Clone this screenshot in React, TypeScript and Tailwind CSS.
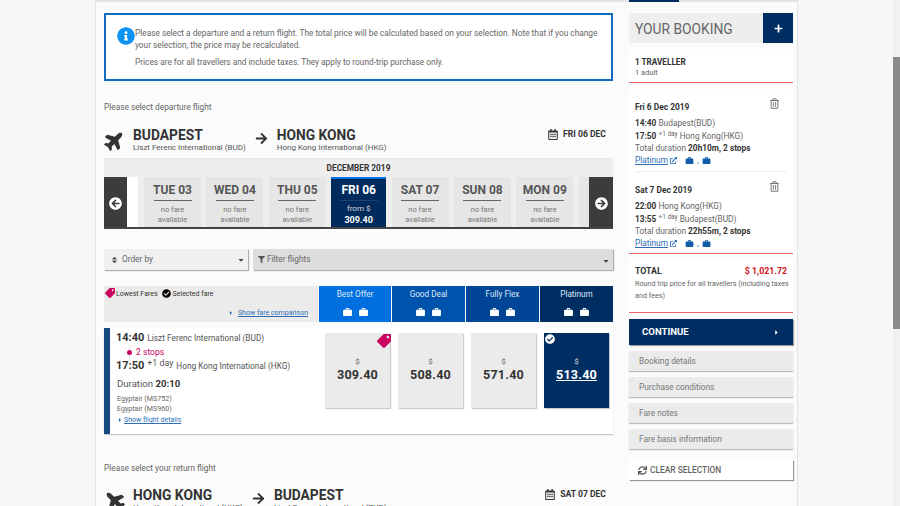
import {
  FaArrowCircleLeft,
  FaArrowCircleRight,
  FaArrowRight,
  FaCaretDown,
  FaCaretRight,
  FaCheckCircle,
  FaExternalLinkAlt,
  FaFilter,
  FaPlane,
  FaPlus,
  FaRegCalendarAlt,
  FaRegTrashAlt,
  FaSort,
  FaSync,
  FaTag,
  FaInfoCircle,
} from "react-icons/fa";

const days = [
  { label: "TUE 03" },
  { label: "WED 04" },
  { label: "THU 05" },
  { label: "FRI 06", selected: true },
  { label: "SAT 07" },
  { label: "SUN 08" },
  { label: "MON 09" },
];

const fares = [
  { name: "Best Offer", bg: "bg-[#0070e0]", w: "w-[72px]" },
  { name: "Good Deal", bg: "bg-[#0053ad]", w: "w-[73px]" },
  { name: "Fully Flex", bg: "bg-[#004596]", w: "w-[73px]" },
  { name: "Platinum", bg: "bg-[#002e63]", w: "w-[73px]" },
];

const Bag = ({ className }: { className?: string }) => (
  <svg viewBox="0 0 10 9" className={className} fill="currentColor">
    <path d="M3 2V1a1 1 0 0 1 1-1h2a1 1 0 0 1 1 1v1h2a1 1 0 0 1 1 1v5a1 1 0 0 1-1 1H1a1 1 0 0 1-1-1V3a1 1 0 0 1 1-1h2zm1 0h2V1H4v1z" />
  </svg>
);

const RouteHeader = ({
  from,
  fromAirport,
  to,
  toAirport,
  date,
  back,
}: {
  from: string;
  fromAirport: string;
  to: string;
  toAirport: string;
  date: string;
  back?: boolean;
}) => (
  <div className="flex items-start h-[30px] text-[#333]">
    <FaPlane className={`w-[21px] h-[21px] mt-[2px] shrink-0 ${back ? "rotate-[225deg]" : "-rotate-45"}`} />
    <div className="ml-[8px] flex flex-col">
      <span className="text-[13.8px] leading-[15px] font-bold">{from}</span>
      <span className="text-[8px] leading-[9px] text-[#555]">{fromAirport}</span>
    </div>
    <FaArrowRight className="w-[13px] h-[13px] ml-[9px] mt-[4px] shrink-0" />
    <div className="ml-[9px] flex flex-col">
      <span className="text-[13.8px] leading-[15px] font-bold">{to}</span>
      <span className="text-[8px] leading-[9px] text-[#555]">{toAirport}</span>
    </div>
    <div className="ml-auto mr-[7px] flex items-center gap-[5px]">
      <FaRegCalendarAlt className="w-[10px] h-[11px]" />
      <span className="text-[8.6px] font-bold">{date}</span>
    </div>
  </div>
);

const DayCard = ({ label, selected }: { label: string; selected?: boolean }) =>
  selected ? (
    <div className="w-[55px] h-[52px] bg-[#002b5c] border-t-[3px] border-[#0070e0] text-white flex flex-col items-center shrink-0">
      <span className="text-[12px] font-bold leading-[14px] mt-[4px]">{label}</span>
      <span className="w-[38px] h-px bg-[#1c4272] mt-[3px]" />
      <span className="text-[8px] leading-[10px] mt-[3px] text-[#ddd]">from $</span>
      <span className="text-[9px] font-bold leading-[10px] mt-[1px]">309.40</span>
    </div>
  ) : (
    <div className="w-[57px] h-[51px] bg-[#e6e6e6] flex flex-col items-center text-[#555] shrink-0">
      <span className="text-[12px] font-bold leading-[14px] mt-[6px]">{label}</span>
      <span className="w-[38px] h-px bg-[#666] mt-[3px]" />
      <span className="text-[7.5px] leading-[10px] mt-[4px] text-[#777] text-center">
        no fare
        <br />
        available
      </span>
    </div>
  );

const FareTile = ({ price, selected, tag }: { price: string; selected?: boolean; tag?: boolean }) => (
  <div
    className={`relative w-[65px] h-[75px] flex flex-col items-center shadow-[1px_1px_1px_rgba(0,0,0,0.2)] ${
      selected ? "bg-[#002e63] text-white" : "bg-[#ebebeb] text-[#333]"
    }`}
  >
    {tag && <FaTag className="absolute -right-[1px] top-[1px] w-[14px] h-[14px] text-[#c8055f] rotate-90" />}
    {selected && <FaCheckCircle className="absolute left-[1px] top-[1px] w-[10px] h-[10px] text-white" />}
    <span className={`text-[8px] mt-[24px] leading-[10px] ${selected ? "text-[#ddd]" : "text-[#666]"}`}>$</span>
    <span className={`text-[12.6px] font-bold leading-[16px] tracking-[0.2px] ${selected ? "underline" : ""}`}>
      {price}
    </span>
  </div>
);

const Leg = ({
  date,
  depTime,
  depPlace,
  arrTime,
  arrPlace,
  duration,
}: {
  date: string;
  depTime: string;
  depPlace: string;
  arrTime: string;
  arrPlace: string;
  duration: string;
}) => (
  <div className="relative pl-[6px] pr-[5px] h-[82px]">
    <FaRegTrashAlt className="absolute right-[14px] top-[9px] w-[9px] h-[11px] text-[#777]" />
    <p className="text-[8.4px] font-bold text-[#333] leading-[12px] pt-[12px]">{date}</p>
    <p className="text-[8.3px] leading-[12px] mt-[4px] text-[#666]">
      <b className="text-[#333]">{depTime}</b> {depPlace}
    </p>
    <p className="text-[8.3px] leading-[12px] mt-px text-[#666]">
      <b className="text-[#333]">{arrTime}</b> <sup className="text-[6.5px]">+1 day</sup> {arrPlace}
    </p>
    <p className="text-[8.3px] leading-[12px] text-[#666]">
      Total duration <b className="text-[#333]">{duration}</b>
    </p>
    <p className="flex items-center text-[8.3px] leading-[12px] text-[#2d6db5]">
      <span className="underline">Platinum</span>
      <FaExternalLinkAlt className="w-[7px] h-[7px] ml-[2px]" />
      <Bag className="w-[9px] h-[7px] ml-[8px] text-[#0f5ca8]" />
      <span className="mx-[3px]">,</span>
      <Bag className="w-[9px] h-[7px] text-[#0f5ca8]" />
    </p>
  </div>
);

const SideButton = ({ label }: { label: string }) => (
  <div className="h-[20px] bg-[#ebebeb] text-[#777] text-[8.3px] leading-[20px] pl-[10px] shadow-[0_1px_1px_rgba(0,0,0,0.25)]">
    {label}
  </div>
);

export default function App() {
  return (
    <div className="w-[900px] h-[506px] overflow-hidden flex bg-[#f7f7f7] font-['Roboto',sans-serif]">
      <div className="w-[95px] shrink-0" />

      <div className="w-[703px] shrink-0 h-[506px] overflow-hidden flex flex-col bg-[#fbfbfb] border-x border-[#e2e2e2]">
        <div className="h-[2px] bg-[#e4e4e4] shrink-0 flex">
          <span className="ml-[533px] w-[50px] bg-[#002e63]" />
        </div>

        <div className="flex">
          <main className="w-[509px] ml-[8px] pt-[11px] shrink-0">
            <div className="relative h-[68px] border-2 border-[#0f6cc0] bg-white pl-[29px] pr-[8px] pt-[12px] text-[8.3px] leading-[12px] text-[#666]">
              <span className="absolute left-[11px] top-[12px] w-[18px] h-[18px]">
                <FaInfoCircle className="w-[18px] h-[18px] text-[#0d94f2]" />
              </span>
              <p>
                Please select a departure and a return flight. The total price will be calculated based on your
                selection. Note that if you change your selection, the price may be recalculated.
              </p>
              <p className="mt-[5px]">Prices are for all travellers and include taxes. They apply to round-trip purchase only.</p>
            </div>

            <p className="text-[8.3px] leading-[12px] text-[#666] mt-[20px]">Please select departure flight</p>
            <div className="mt-[15px]">
              <RouteHeader
                from="BUDAPEST"
                fromAirport="Liszt Ferenc International (BUD)"
                to="HONG KONG"
                toAirport="Hong Kong International (HKG)"
                date="FRI 06 DEC"
              />
            </div>

            <div className="h-[71px] bg-[#eeeeee] border-t border-[#e4e4e4] flex flex-col">
              <p className="text-center text-[8.3px] font-bold text-[#333] leading-[10px] pt-[4px] h-[18px] shrink-0">DECEMBER 2019</p>
              <div className="relative flex-1 flex items-start overflow-hidden border-b-2 border-[#444]">
                <div className="w-[23px] h-[52px] bg-[#3c3c3c] shrink-0 flex items-center justify-center">
                  <FaArrowCircleLeft className="w-[13px] h-[13px] text-white" />
                </div>
                <div className="w-[11px] h-[52px] bg-white shrink-0" />
                <div className="ml-[6px] flex gap-[5.4px] pt-0 items-end h-[51px]">
                  {days.map((d) => (
                    <DayCard key={d.label} label={d.label} selected={d.selected} />
                  ))}
                  <div className="w-[57px] h-[51px] bg-[#e6e6e6] shrink-0" />
                </div>
                <div className="absolute right-0 top-0 w-[24px] h-[52px] bg-[#3c3c3c] flex items-center justify-center">
                  <FaArrowCircleRight className="w-[13px] h-[13px] text-white" />
                </div>
              </div>
            </div>

            <div className="flex mt-[20px] h-[21px] text-[#666] text-[8.3px] gap-[5px]">
              <div className="w-[144px] bg-[#f0f0f0] shadow-[1px_1px_1px_rgba(0,0,0,0.3)] flex items-center pl-[7px] pr-[3px]">
                <FaSort className="w-[7px] h-[8px] text-[#555]" />
                <span className="ml-[4px]">Order by</span>
                <FaCaretDown className="ml-auto w-[8px] h-[8px] text-[#444]" />
              </div>
              <div className="flex-1 bg-[#dddddd] shadow-[1px_1px_1px_rgba(0,0,0,0.3)] flex items-center pl-[5px] pr-[3px]">
                <FaFilter className="w-[7px] h-[7px] text-[#555]" />
                <span className="ml-[2px]">Filter flights</span>
                <FaCaretDown className="ml-auto w-[8px] h-[8px] mt-[3px] text-[#444]" />
              </div>
            </div>

            <div className="flex mt-[16px] h-[36px]">
              <div className="w-[215px] bg-[#ebebeb] relative text-[7px] text-[#333]">
                <div className="flex items-center h-[14px] pl-[1px]">
                  <FaTag className="w-[10px] h-[10px] text-[#c8055f] rotate-90" />
                  <span className="ml-[1px] mt-[3px]">Lowest Fares</span>
                  <FaCheckCircle className="w-[9px] h-[9px] ml-[4px] text-black" />
                  <span className="ml-[2px] mt-[3px]">Selected fare</span>
                </div>
                <div className="flex justify-end items-center pr-[10px] mt-[8px] text-[#2d6db5]">
                  <FaCaretRight className="w-[6px] h-[6px]" />
                  <span className="ml-[4px] underline">Show fare comparison</span>
                </div>
              </div>
              <div className="flex flex-1 ml-px gap-px">
                {fares.map((f) => (
                  <div key={f.name} className={`${f.bg} ${f.w} text-[#dce8f7] flex flex-col items-center`}>
                    <span className="text-[8.2px] leading-[12px] mt-[2px]">{f.name}</span>
                    <span className="flex items-center gap-[7px] mt-[8px] text-white">
                      <Bag className="w-[9px] h-[8px]" />
                      <Bag className="w-[9px] h-[8px]" />
                    </span>
                  </div>
                ))}
              </div>
            </div>

            <div className="flex mt-[6px] h-[106px] bg-white border-l-[6px] border-[#184a80] shadow-[0_1px_1px_rgba(0,0,0,0.2)]">
              <div className="w-[215px] shrink-0 pl-[6px] text-[#555]">
                <div className="flex items-baseline text-[8.3px] h-[16px] mt-[2px]">
                  <b className="text-[11px] text-[#333]">14:40</b>
                  <span className="ml-[3px]">Liszt Ferenc International (BUD)</span>
                </div>
                <div className="flex items-center h-[12px] ml-[11px] text-[8.6px] text-[#c8055f]">
                  <span className="relative w-[5px] h-[5px] flex items-center justify-center">
                    <span className="absolute left-[2px] -top-[5px] w-px h-[15px] bg-[#e4e4e4]" />
                    <span className="relative w-[5px] h-[5px] rounded-full bg-[#c8055f]" />
                  </span>
                  <span className="ml-[4px]">2 stops</span>
                </div>
                <div className="flex items-baseline text-[8.3px] h-[15px]">
                  <b className="text-[11px] text-[#333]">17:50</b>
                  <span className="ml-[3px] text-[8.8px] relative -top-[3px]">+1 day</span>
                  <span className="ml-[3px]">Hong Kong International (HKG)</span>
                </div>
                <p className="ml-[1px] text-[9.6px] leading-[13px] mt-[4px]">
                  Duration <b className="text-[#333]">20:10</b>
                </p>
                <p className="ml-[1px] text-[7.1px] leading-[10px] mt-[4px] text-[#666]">Egyptair (MS752)</p>
                <p className="ml-[1px] text-[7.1px] leading-[10px] text-[#666]">Egyptair (MS960)</p>
                <div className="flex items-center ml-[1px] mt-[1px] text-[7px] leading-[10px] text-[#2d6db5]">
                  <FaCaretRight className="w-[6px] h-[6px]" />
                  <span className="ml-[1px] underline">Show flight details</span>
                </div>
              </div>
              <div className="flex gap-[8px] pt-[5px]">
                <FareTile price="309.40" tag />
                <FareTile price="508.40" />
                <FareTile price="571.40" />
                <FareTile price="513.40" selected />
              </div>
            </div>

            <p className="text-[8.3px] leading-[12px] text-[#666] mt-[28px]">Please select your return flight</p>
            <div className="mt-[14px]">
              <RouteHeader
                from="HONG KONG"
                fromAirport="Hong Kong International (HKG)"
                to="BUDAPEST"
                toAirport="Liszt Ferenc International (BUD)"
                date="SAT 07 DEC"
                back
              />
            </div>
          </main>

          <aside className="w-[164px] ml-[16px] pt-[11px] shrink-0">
            <div className="h-[30px] bg-[#eeeeee] flex items-center">
              <span className="pl-[6px] pt-[2px] text-[13.8px] text-[#666]">YOUR BOOKING</span>
              <span className="ml-auto w-[30px] h-[30px] bg-[#002e63] flex items-center justify-center">
                <FaPlus className="w-[9px] h-[9px] text-white" />
              </span>
            </div>

            <div className="mt-[6px] h-[34px] bg-white border-b border-[#e56a6a] pl-[6px] pt-[8px]">
              <p className="text-[8.2px] font-bold text-[#333] leading-[11px]">1 TRAVELLER</p>
              <p className="text-[7.5px] text-[#666] leading-[9px]">1 adult</p>
            </div>

            <div className="mt-[6px] h-[165px] bg-white border-b border-[#e56a6a]">
              <Leg
                date="Fri 6 Dec 2019"
                depTime="14:40"
                depPlace="Budapest(BUD)"
                arrTime="17:50"
                arrPlace="Hong Kong(HKG)"
                duration="20h10m, 2 stops"
              />
              <div className="mx-[6px] h-px bg-[#eeeeee]" />
              <Leg
                date="Sat 7 Dec 2019"
                depTime="22:00"
                depPlace="Hong Kong(HKG)"
                arrTime="13:55"
                arrPlace="Budapest(BUD)"
                duration="22h55m, 2 stops"
              />
            </div>

            <div className="mt-[6px] h-[53px] bg-white border-b border-[#e56a6a] pl-[6px] pr-[6px] pt-[6px]">
              <p className="flex justify-between text-[8.8px] font-bold leading-[11px]">
                <span className="text-[#333]">TOTAL</span>
                <span className="text-[#d0101a]">$ 1,021.72</span>
              </p>
              <p className="text-[7.2px] leading-[12px] mt-[1px] text-[#666] -mr-[4px]">
                Round trip price for all travellers (including taxes and fees)
              </p>
            </div>

            <div className="mt-[6px] h-[26px] bg-[#002e63] shadow-[1px_1px_1px_rgba(0,0,0,0.35)] flex items-center pl-[13px] pr-[13px] text-white text-[9.6px] font-bold">
              CONTINUE
              <FaCaretRight className="ml-auto w-[7px] h-[7px]" />
            </div>

            <div className="mt-[6px] flex flex-col gap-[6px]">
              <SideButton label="Booking details" />
              <SideButton label="Purchase conditions" />
              <SideButton label="Fare notes" />
              <SideButton label="Fare basis information" />
            </div>

            <div className="mt-[11px] h-[20px] bg-white shadow-[1px_1px_1px_rgba(0,0,0,0.4)] flex items-center pl-[9px] text-[#666] text-[8.4px] font-medium">
              <FaSync className="w-[9px] h-[9px] text-[#555]" />
              <span className="ml-[3px]">CLEAR SELECTION</span>
            </div>
          </aside>
        </div>
      </div>

      <div className="ml-auto w-[7px] h-[506px] bg-[#f1f1f1] flex flex-col">
        <div className="h-[57px] shrink-0" />
        <div className="h-[272px] bg-[#8a8a8a]" />
      </div>
    </div>
  );
}
